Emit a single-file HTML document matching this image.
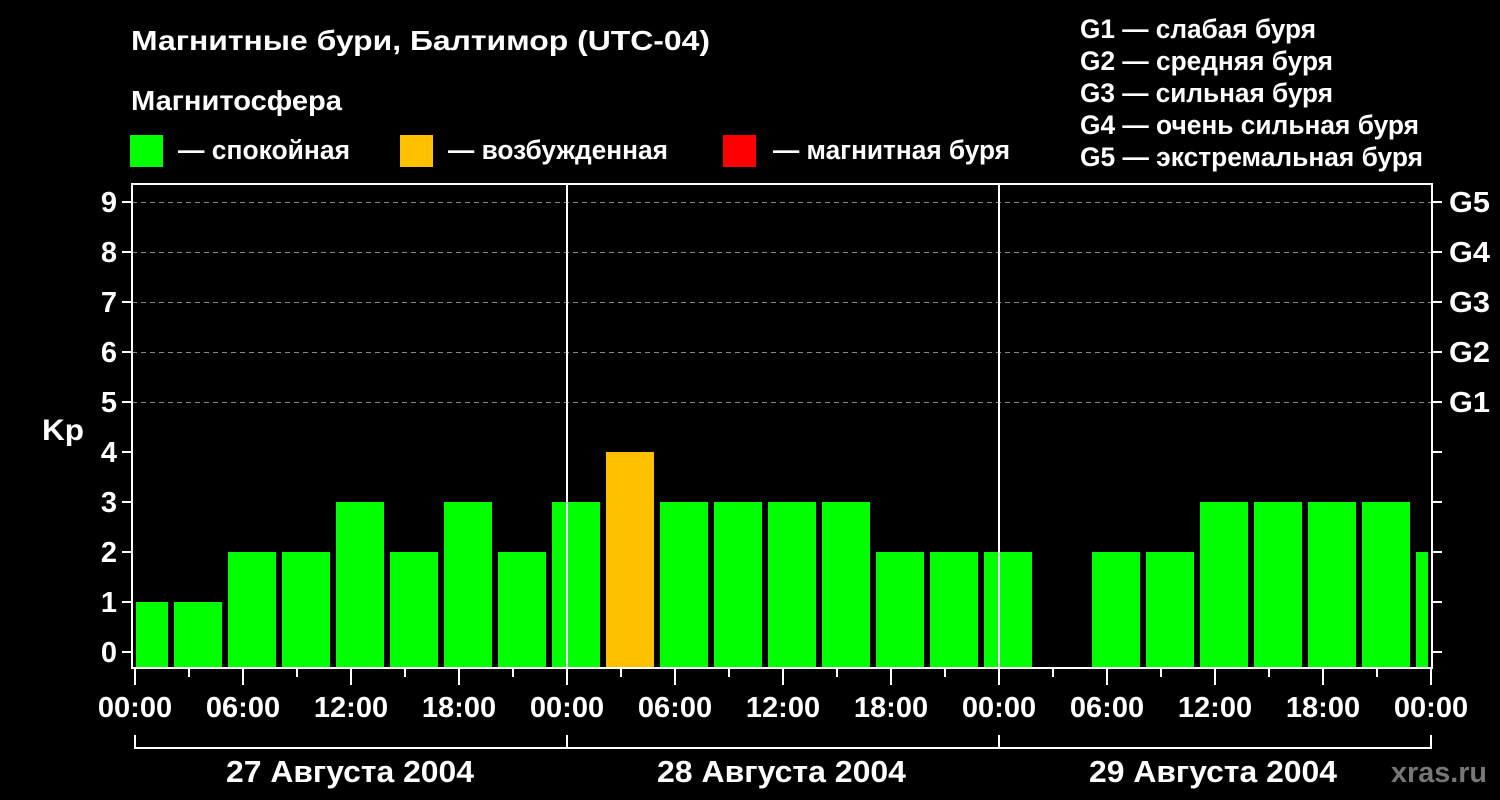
<!DOCTYPE html>
<html><head><meta charset="utf-8"><style>html,body{margin:0;padding:0;background:#000;}svg{display:block}text{font-family:"Liberation Sans",sans-serif;font-weight:bold;fill:#fff}</style></head><body>
<svg width="1500" height="800" xmlns="http://www.w3.org/2000/svg">
<rect width="1500" height="800" fill="#000"/>
<text x="131" y="50" font-size="28" textLength="579" lengthAdjust="spacingAndGlyphs">Магнитные бури, Балтимор (UTC-04)</text>
<text x="131" y="110" font-size="28" textLength="211" lengthAdjust="spacingAndGlyphs">Магнитосфера</text>
<rect x="130" y="135" width="33" height="32" fill="#00ff00"/>
<text x="178" y="159" font-size="27" textLength="172" lengthAdjust="spacingAndGlyphs">— спокойная</text>
<rect x="400" y="135" width="33" height="32" fill="#ffc000"/>
<text x="448" y="159" font-size="27" textLength="220" lengthAdjust="spacingAndGlyphs">— возбужденная</text>
<rect x="723" y="135" width="33" height="32" fill="#ff0000"/>
<text x="773" y="159" font-size="27" textLength="237" lengthAdjust="spacingAndGlyphs">— магнитная буря</text>
<g font-size="27">
<text x="1080" y="38" textLength="236" lengthAdjust="spacingAndGlyphs">G1 — слабая буря</text>
<text x="1080" y="70" textLength="253" lengthAdjust="spacingAndGlyphs">G2 — средняя буря</text>
<text x="1080" y="102" textLength="253" lengthAdjust="spacingAndGlyphs">G3 — сильная буря</text>
<text x="1080" y="134" textLength="339" lengthAdjust="spacingAndGlyphs">G4 — очень сильная буря</text>
<text x="1080" y="166" textLength="343" lengthAdjust="spacingAndGlyphs">G5 — экстремальная буря</text>
</g>
<g stroke="#888" stroke-width="1" stroke-dasharray="5,4">
<line x1="132" y1="202.5" x2="1432" y2="202.5"/>
<line x1="132" y1="252.5" x2="1432" y2="252.5"/>
<line x1="132" y1="302.5" x2="1432" y2="302.5"/>
<line x1="132" y1="352.5" x2="1432" y2="352.5"/>
<line x1="132" y1="402.5" x2="1432" y2="402.5"/>
</g>
<g fill="#00ff00">
<rect x="136" y="602" width="32" height="66"/>
<rect x="174" y="602" width="48" height="66"/>
<rect x="228" y="552" width="48" height="116"/>
<rect x="282" y="552" width="48" height="116"/>
<rect x="336" y="502" width="48" height="166"/>
<rect x="390" y="552" width="48" height="116"/>
<rect x="444" y="502" width="48" height="166"/>
<rect x="498" y="552" width="48" height="116"/>
<rect x="552" y="502" width="48" height="166"/>
<rect x="660" y="502" width="48" height="166"/>
<rect x="714" y="502" width="48" height="166"/>
<rect x="768" y="502" width="48" height="166"/>
<rect x="822" y="502" width="48" height="166"/>
<rect x="876" y="552" width="48" height="116"/>
<rect x="930" y="552" width="48" height="116"/>
<rect x="984" y="552" width="48" height="116"/>
<rect x="1092" y="552" width="48" height="116"/>
<rect x="1146" y="552" width="48" height="116"/>
<rect x="1200" y="502" width="48" height="166"/>
<rect x="1254" y="502" width="48" height="166"/>
<rect x="1308" y="502" width="48" height="166"/>
<rect x="1362" y="502" width="48" height="166"/>
<rect x="1416" y="552" width="12" height="116"/>
</g>
<rect x="606" y="452" width="48" height="216" fill="#ffc000"/>
<g stroke="#fff" stroke-width="2" fill="none">
<rect x="132" y="184" width="1300" height="484"/>
<line x1="567" y1="184" x2="567" y2="668"/>
<line x1="999" y1="184" x2="999" y2="668"/>
<path d="M135 735V748H1431V735M567 735V748M999 735V748"/>
</g>
<g stroke="#fff" stroke-width="2">
<path d="M122 202H132M122 252H132M122 302H132M122 352H132M122 402H132M122 452H132M122 502H132M122 552H132M122 602H132M122 652H132"/>
<path d="M1432 202H1442M1432 252H1442M1432 302H1442M1432 352H1442M1432 402H1442M1432 452H1442M1432 502H1442M1432 552H1442M1432 602H1442M1432 652H1442"/>
<path d="M135 668V685M189 668V677M243 668V685M297 668V677M351 668V685M405 668V677M459 668V685M513 668V677M567 668V685M621 668V677M675 668V685M729 668V677M783 668V685M837 668V677M891 668V685M945 668V677M999 668V685M1053 668V677M1107 668V685M1161 668V677M1215 668V685M1269 668V677M1323 668V685M1377 668V677M1431 668V685"/>
</g>
<g font-size="29" text-anchor="end">
<text x="117" y="212">9</text><text x="117" y="262">8</text><text x="117" y="312">7</text><text x="117" y="362">6</text><text x="117" y="412">5</text><text x="117" y="462">4</text><text x="117" y="512">3</text><text x="117" y="562">2</text><text x="117" y="612">1</text><text x="117" y="662">0</text>
</g>
<text x="42" y="440" font-size="30" textLength="42" lengthAdjust="spacingAndGlyphs">Kp</text>
<g font-size="29">
<text x="1449" y="212" textLength="41" lengthAdjust="spacingAndGlyphs">G5</text><text x="1449" y="262" textLength="41" lengthAdjust="spacingAndGlyphs">G4</text><text x="1449" y="312" textLength="41" lengthAdjust="spacingAndGlyphs">G3</text><text x="1449" y="362" textLength="41" lengthAdjust="spacingAndGlyphs">G2</text><text x="1449" y="412" textLength="41" lengthAdjust="spacingAndGlyphs">G1</text>
</g>
<g font-size="29" text-anchor="middle">
<text x="135" y="717">00:00</text><text x="243" y="717">06:00</text><text x="351" y="717">12:00</text><text x="459" y="717">18:00</text>
<text x="567" y="717">00:00</text><text x="675" y="717">06:00</text><text x="783" y="717">12:00</text><text x="891" y="717">18:00</text>
<text x="999" y="717">00:00</text><text x="1107" y="717">06:00</text><text x="1215" y="717">12:00</text><text x="1323" y="717">18:00</text>
<text x="1431" y="717">00:00</text>
</g>
<g font-size="31">
<text x="226" y="782" textLength="248" lengthAdjust="spacingAndGlyphs">27 Августа 2004</text>
<text x="657" y="782" textLength="249" lengthAdjust="spacingAndGlyphs">28 Августа 2004</text>
<text x="1089" y="782" textLength="248" lengthAdjust="spacingAndGlyphs">29 Августа 2004</text>
</g>
<text x="1391" y="782" font-size="29" style="fill:#777" textLength="96" lengthAdjust="spacingAndGlyphs">xras.ru</text>
</svg>
</body></html>
